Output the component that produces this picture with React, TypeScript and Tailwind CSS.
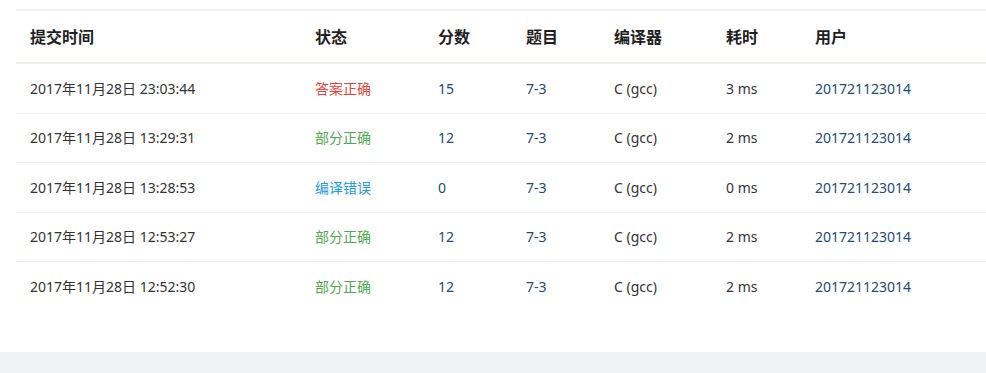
const rows = [
  { time: "2017年11月28日 23:03:44", status: "答案正确", score: "15", time2: "3 ms" },
  { time: "2017年11月28日 13:29:31", status: "部分正确", score: "12", time2: "2 ms" },
  { time: "2017年11月28日 13:28:53", status: "编译错误", score: "0", time2: "0 ms" },
  { time: "2017年11月28日 12:53:27", status: "部分正确", score: "12", time2: "2 ms" },
  { time: "2017年11月28日 12:52:30", status: "部分正确", score: "12", time2: "2 ms" },
];

const statusColor: Record<string, string> = {
  "答案正确": "text-[#e8443a]",
  "部分正确": "text-[#52a852]",
  "编译错误": "text-[#1e9be8]",
};

const cols = "grid grid-cols-[285px_123px_88px_88px_112px_89px_1fr]";

export default function App() {
  return (
    <div className="w-[986px] h-[373px] bg-[#f0f2f5] font-['Noto_Sans','Noto_Sans_CJK_SC',sans-serif] overflow-hidden">
      <div className="bg-white h-[352px] pt-[9px] pl-4">
        <div className="border-t-2 border-[#eef0f3]">
          <div className={`${cols} h-[53px] items-center border-b-2 border-[#eaedf1] text-[16px] font-bold text-[#1f1f1f]`}>
            <div className="pl-[14px]">提交时间</div>
            <div className="pl-[14px]">状态</div>
            <div className="pl-[14px]">分数</div>
            <div className="pl-[14px]">题目</div>
            <div className="pl-[14px]">编译器</div>
            <div className="pl-[14px]">耗时</div>
            <div className="pl-[14px]">用户</div>
          </div>
          {rows.map((r, i) => (
            <div
              key={i}
              className={`${cols} h-[49.5px] items-center text-[14px] text-[#333] ${i < rows.length - 1 ? "border-b border-[#edf0f3]" : ""}`}
            >
              <div className="pl-[14px]">{r.time}</div>
              <div className={`pl-[14px] ${statusColor[r.status]}`}>{r.status}</div>
              <div className="pl-[14px] text-[#234a78]">{r.score}</div>
              <div className="pl-[14px] text-[#234a78]">7-3</div>
              <div className="pl-[14px]">C (gcc)</div>
              <div className="pl-[14px]">{r.time2}</div>
              <div className="pl-[14px] text-[#234a78]">201721123014</div>
            </div>
          ))}
        </div>
      </div>
    </div>
  );
}
